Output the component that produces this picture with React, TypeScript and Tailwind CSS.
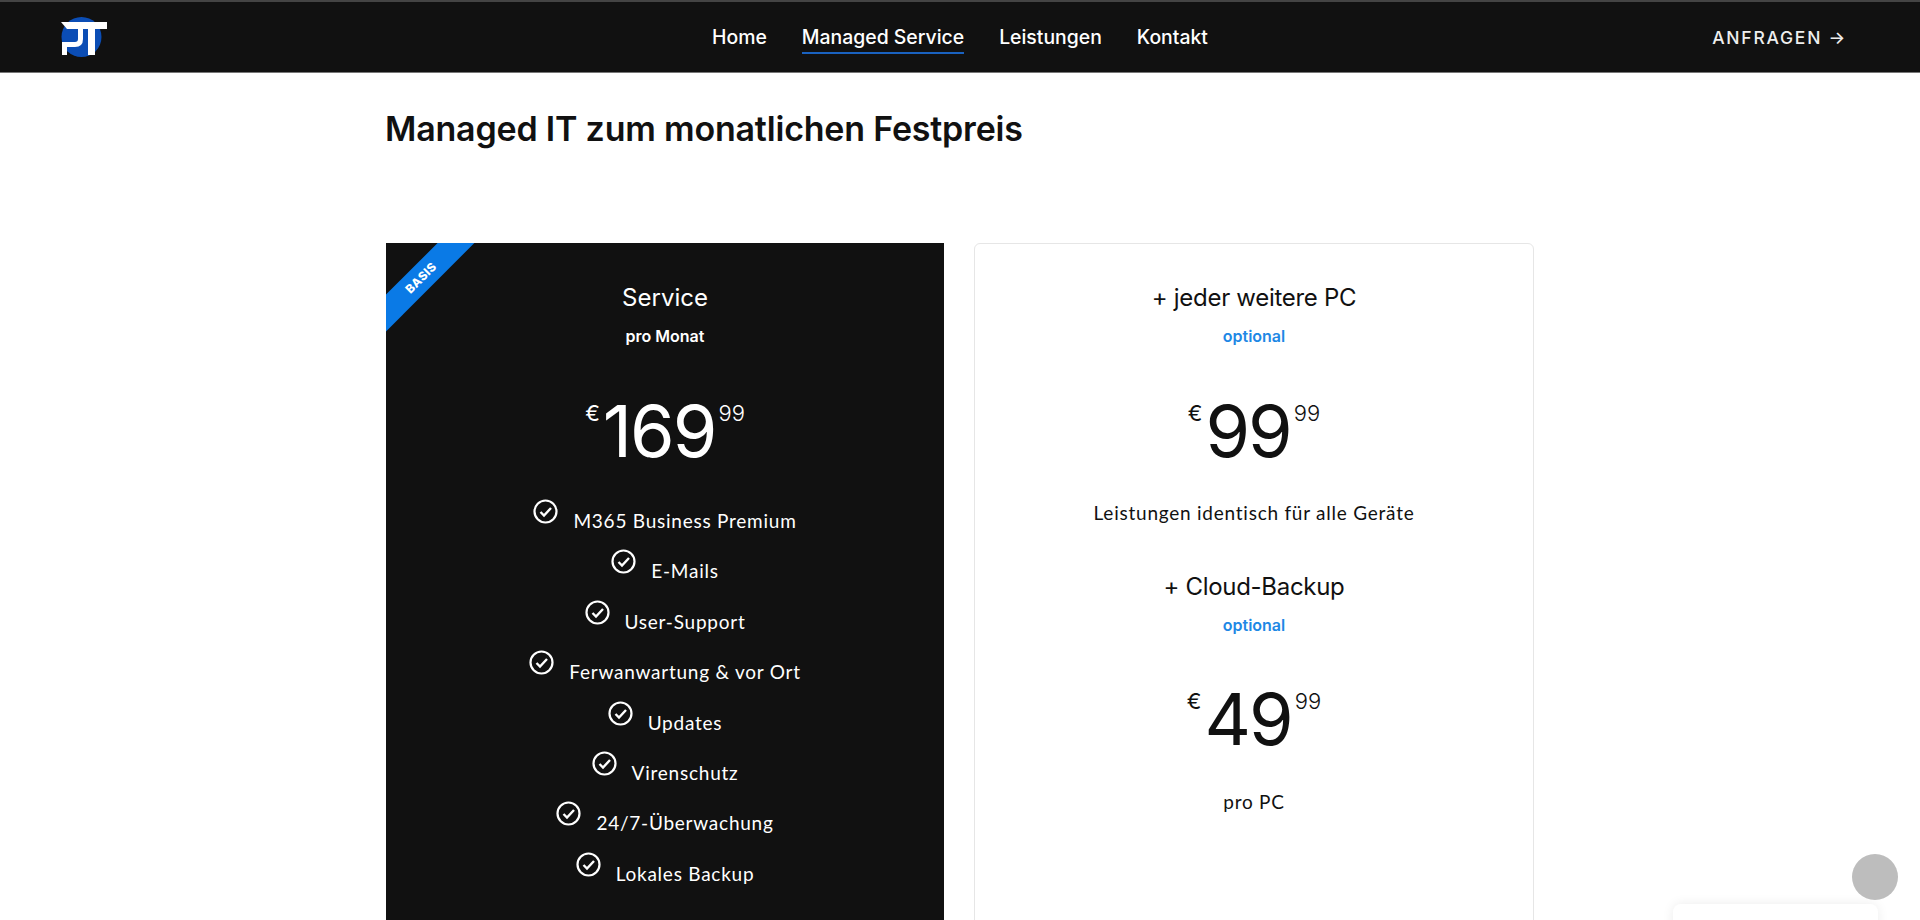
const features = [
  "M365 Business Premium",
  "E-Mails",
  "User-Support",
  "Ferwanwartung & vor Ort",
  "Updates",
  "Virenschutz",
  "24/7-Überwachung",
  "Lokales Backup",
]

const Logo = () => (
  <svg width="47" height="40" viewBox="0 0 47 40">
    <ellipse cx="20.5" cy="20" rx="20" ry="20" fill="#0b4db5" />
    <path d="M0 5H46V12H6Z" fill="#fff" />
    <rect x="27" y="12" width="7" height="26" fill="#fff" />
    <path d="M3.5 38V27.5H14Q19.5 27.5 19.5 22V12" fill="none" stroke="#fff" strokeWidth="5" />
  </svg>
)

const Check = () => (
  <svg width="25" height="25" viewBox="0 0 25 25" fill="none" stroke="#fff" className="shrink-0">
    <circle cx="12.5" cy="12.5" r="11" strokeWidth="2.2" />
    <path d="M7.5 13l3.5 3.5 7-7.5" strokeWidth="2.4" />
  </svg>
)

const Price = ({ euro, cents }: { euro: string; cents: string }) => (
  <div className="flex justify-center h-[90px] leading-[90px]">
    <span className="text-[22px] leading-[26px] mt-[14px] mr-[3px]">€</span>
    <span className="text-[72px] tracking-[-2px]">{euro}</span>
    <span className="text-[22px] leading-[26px] mt-[14px] ml-[3px] font-light">{cents}</span>
  </div>
)

const App = () => {
  return (
    <div className="h-[920px] overflow-hidden bg-white font-['Inter',sans-serif] text-[#111]">
      <header className="h-[73px] bg-[#111] border-t-2 border-t-[#444] border-b border-b-[#777] grid grid-cols-3 items-center text-white">
        <div className="pl-[61px]">
          <Logo />
        </div>
        <nav className="flex justify-center items-center gap-[35px] mt-[5px] text-[19.4px] font-medium leading-6 whitespace-nowrap">
          <a className="pb-[3px] border-b-2 border-transparent">Home</a>
          <a className="pb-[3px] border-b-2 border-[#1a62c0]">Managed Service</a>
          <a className="pb-[3px] border-b-2 border-transparent">Leistungen</a>
          <a className="pb-[3px] border-b-2 border-transparent">Kontakt</a>
        </nav>
        <div className="flex justify-end pr-[73px] mt-[3px] text-[17.5px] font-medium tracking-[0.1em] text-[#eee]">
          ANFRAGEN →
        </div>
      </header>

      <main className="w-[1148px] mx-auto pt-[36px]">
        <h1 className="-ml-[1px] text-[34px] leading-10 font-semibold tracking-[-0.2px]">Managed IT zum monatlichen Festpreis</h1>

        <div className="flex gap-[30px] mt-[94px]">
          <section className="relative w-[558px] h-[800px] bg-[#111] text-white overflow-hidden pt-[39px]">
            <div className="absolute left-[-35px] top-[22px] w-[140px] h-[26px] -rotate-45 bg-[#0a7ae6] flex items-center justify-center text-[12px] font-extrabold tracking-[0.03em]">
              BASIS
            </div>
            <h2 className="text-center text-[24px] leading-8">Service</h2>
            <p className="text-center text-[16px] leading-5 font-semibold mt-[12px]">pro Monat</p>
            <div className="mt-[40px]">
              <Price euro="169" cents="99" />
            </div>
            <ul className="mt-[23px] font-['Lato',sans-serif] text-[19px] tracking-[0.04em]">
              {features.map((f) => (
                <li key={f} className="h-[50.4px] flex justify-center">
                  <Check />
                  <span className="ml-[15px] mt-[10px] leading-6">{f}</span>
                </li>
              ))}
            </ul>
          </section>

          <section className="w-[560px] h-[800px] bg-white border border-[#e6e6e6] rounded-md pt-[38px] text-center">
            <h2 className="text-[24px] leading-8 tracking-[-0.3px]">+ jeder weitere PC</h2>
            <p className="text-[16px] leading-5 font-semibold mt-[12px] text-[#1e88e5]">optional</p>
            <div className="mt-[40px]">
              <Price euro="99" cents="99" />
            </div>
            <p className="mt-[25px] leading-6 font-['Lato',sans-serif] text-[19px] tracking-[0.04em]">
              Leistungen identisch für alle Geräte
            </p>
            <h2 className="mt-[46px] text-[24px] leading-8 tracking-[-0.3px]">+ Cloud-Backup</h2>
            <p className="text-[16px] leading-5 font-semibold mt-[12px] text-[#1e88e5]">optional</p>
            <div className="mt-[39px]">
              <Price euro="49" cents="99" />
            </div>
            <p className="mt-[26px] leading-6 font-['Lato',sans-serif] text-[19px] tracking-[0.04em]">pro PC</p>
          </section>
        </div>
      </main>

      <div className="fixed right-[42px] top-[904px] w-[205px] h-[60px] bg-white rounded-t-lg shadow-[0_0_12px_rgba(0,0,0,0.08)]" />
      <div className="fixed left-[1852px] top-[854px] w-[46px] h-[46px] rounded-full bg-[#bdbdbd]" />
    </div>
  )
}

export default App
